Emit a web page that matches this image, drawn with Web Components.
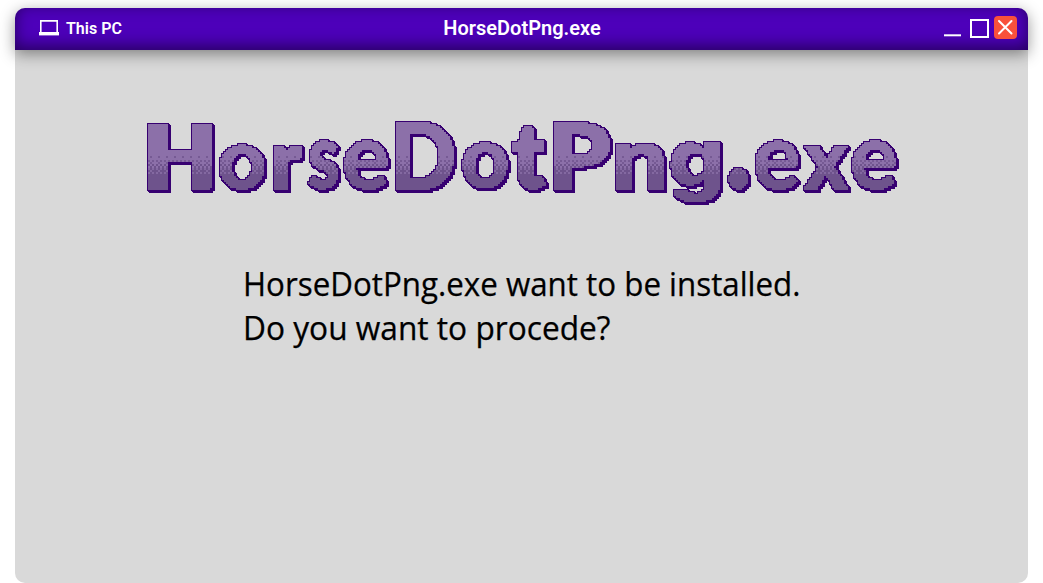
<!DOCTYPE html>
<html lang="en"><head><meta charset="utf-8"><title>HorseDotPng.exe</title>
<style>html,body{margin:0;height:100%;background:#fff;overflow:hidden}</style></head>
<body>
<app-window><title-bar slot="bar" place="This PC">HorseDotPng.exe</title-bar><pixel-logo></pixel-logo><install-message></install-message></app-window>
<script>
class AppWindow extends HTMLElement{constructor(){super();this.attachShadow({mode:'open'}).innerHTML=`
<style>:host{display:flex;flex-direction:column;box-sizing:border-box;height:583px;margin:0 15px;padding-top:8px}
.body{flex:1;background:#d9d9d9;border-radius:0 0 10px 10px;display:flex;flex-direction:column;align-items:flex-start}</style>
<slot name="bar"></slot><div class="body"><slot></slot></div>`}}
customElements.define('app-window',AppWindow);

class TitleBar extends HTMLElement{constructor(){super();this.attachShadow({mode:'open'}).innerHTML=`
<style>:host{position:relative;z-index:1;display:grid;grid-template-columns:1fr auto 1fr;align-items:center;height:42px;box-sizing:border-box;padding:0 11px 2px 24px;background:#4d00ba;color:#fff;border-radius:10px 10px 0 0;font-family:Roboto,sans-serif;font-weight:600;box-shadow:0 4px 15px rgba(0,0,0,.42),inset 0 -4px 15px rgba(0,0,0,.5)}
.place{display:flex;align-items:center;gap:7px;font-size:16px}
.name{font-size:20px;transform:translateX(-6px)}
svg{display:block}.controls{display:flex;justify-content:flex-end;align-items:center;margin-top:-2px}</style>
<div class="place"><svg width="20" height="16" viewBox="0 0 20 16"><path d="M1.8 12V.9h16.4V12" fill="none" stroke="#fff" stroke-width="1.6"/><path d="M0 12h20v3.4H0z" fill="#fff"/></svg><span></span></div>
<div class="name"><slot></slot></div>
<div class="controls"><svg width="73" height="24" viewBox="0 0 73 24"><path d="M0 20.3h17" stroke="#fff" stroke-width="2"/><path d="M27 5h17v17H27z" fill="none" stroke="#fff" stroke-width="2"/><rect x="50" y="1" width="23" height="23" rx="4" fill="#f9513b"/><path d="M55 6l12.5 12.5M67.5 6L55 18.500" stroke="#fff" stroke-width="2" stroke-linecap="round"/></svg></div>`;
this.shadowRoot.querySelector('.place span').textContent=this.getAttribute('place')}}
customElements.define('title-bar',TitleBar);

class PixelLogo extends HTMLElement{constructor(){super();
const root=this.attachShadow({mode:'open'});
// Each letter: glyph, left, top, right and bottom of its face, then extra weight.
const letters=[['H',147.500,122,211,189.500,6],['o',219,144,264,189.500,1],['r',272,144,303,189.500,4],['s',308,140,338,189.500,1],['e',343,140,387,189.500,0],['D',394,122,454,189.500,2],['o',462,142,507,188.500,1],['t',511,127,546,189.500,4],['P',553,122,610,189.500,3],['n',615,142,664,189.500,2],['g',670,142,720,202.500,0],['.',727,168,749,189.500,0],['e',754,140,798,189.500,0],['x',803,144,848,189.500,3],['e',851,140,895,189.500,0]];
const ctx=document.createElement('canvas').getContext('2d');
const texts=letters.map(([c,l,t,r,b,sw])=>{const [font,weight]=c==='g'?['Inter',800]:['Lato',900],pad=sw/2;ctx.font=weight+' 100px '+font;
const m=ctx.measureText(c),left=m.actualBoundingBoxLeft+pad,up=m.actualBoundingBoxAscent+pad,w=m.actualBoundingBoxRight+pad+left,h=m.actualBoundingBoxDescent+pad+up,sx=(r-l)/w,sy=(b-t)/h;
return `<text font-family="${font}, sans-serif" font-weight="${weight}" font-size="100" stroke="#000" stroke-width="${sw}" stroke-linejoin="round" transform="matrix(${sx} 0 0 ${sy} ${l+left*sx} ${t+up*sy})">${c}</text>`}).join('');
const dots=(y,step,off,color,n)=>`<feFlood x="${140+off}" y="${y}" width="2" height="2" flood-color="${color}" result="a"/><feOffset in="a" x="140" y="${y}" width="${step}" height="2" result="b"/><feTile in="b" x="140" y="${y}" width="764" height="2" result="${n}"/>`;
const rows=[[156,8,2,'#765a94'],[160,4,0,'#765a94'],[162,8,2,'#765a94'],[164,4,0,'#6e538c'],[166,4,2,'#6e538c'],[168,4,0,'#8469a1'],[170,8,2,'#8469a1'],[172,4,0,'#8469a1']];
root.innerHTML=`<style>:host{display:block;width:1013px;height:166px}svg{display:block}</style>
<svg width="1013" height="166" viewBox="15 50 1013 166" role="img" aria-label="HorseDotPng.exe"><defs>
<filter id="pixel" filterUnits="userSpaceOnUse" x="140" y="112" width="764" height="100" color-interpolation-filters="sRGB">
<feFlood x="140" y="112" width="1" height="1" flood-color="#000" result="p"/><feOffset in="p" x="140" y="112" width="2" height="2" result="cell"/><feTile in="cell" result="grid"/>
<feComposite in="SourceAlpha" in2="grid" operator="in" result="sample"/>
<feOffset in="sample" dx="1" result="s1"/><feOffset in="sample" dy="1" result="s2"/><feOffset in="sample" dx="1" dy="1" result="s3"/>
<feMerge result="soft"><feMergeNode in="sample"/><feMergeNode in="s1"/><feMergeNode in="s2"/><feMergeNode in="s3"/></feMerge>
<feComponentTransfer in="soft" result="face"><feFuncA type="discrete" tableValues="0 1"/></feComponentTransfer>
<feMorphology in="face" operator="dilate" radius="1" result="edge"/><feOffset in="edge" dx="1" dy="1" result="e1"/><feOffset in="edge" dx="2" dy="2" result="e2"/>
<feMerge result="solid"><feMergeNode in="edge"/><feMergeNode in="e1"/><feMergeNode in="e2"/></feMerge>
<feFlood flood-color="#370071" result="ink"/><feComposite in="ink" in2="solid" operator="in" result="outline"/>
<feFlood flood-color="#8c70a9" result="light"/><feFlood x="140" y="168" width="764" height="44" flood-color="#6e538c" result="dark"/>
${rows.map((r,i)=>dots(...r,'d'+i)).join('')}
<feMerge result="paint"><feMergeNode in="light"/><feMergeNode in="dark"/>${rows.map((r,i)=>`<feMergeNode in="d${i}"/>`).join('')}</feMerge>
<feComposite in="paint" in2="face" operator="in" result="front"/>
<feMerge><feMergeNode in="outline"/><feMergeNode in="front"/></feMerge></filter></defs>
<g filter="url(#pixel)">${texts}</g></svg>`}}
customElements.define('pixel-logo',PixelLogo);

class InstallMessage extends HTMLElement{constructor(){super();this.attachShadow({mode:'open'}).innerHTML=`
<style>:host{display:block;padding:34px 0 0 218px;font-family:"Open Sans",sans-serif}svg{display:block;overflow:visible}text{font-size:32px;fill:#000;stroke:#000;stroke-width:.25px}</style>
<svg width="700" height="120" viewBox="233 250 700 120"><text x="243" y="296" textLength="557.5" lengthAdjust="spacingAndGlyphs">HorseDotPng.exe want to be installed.</text><text x="243" y="340" textLength="367.5" lengthAdjust="spacingAndGlyphs">Do you want to procede?</text></svg>`}}
customElements.define('install-message',InstallMessage);
</script></body></html>
